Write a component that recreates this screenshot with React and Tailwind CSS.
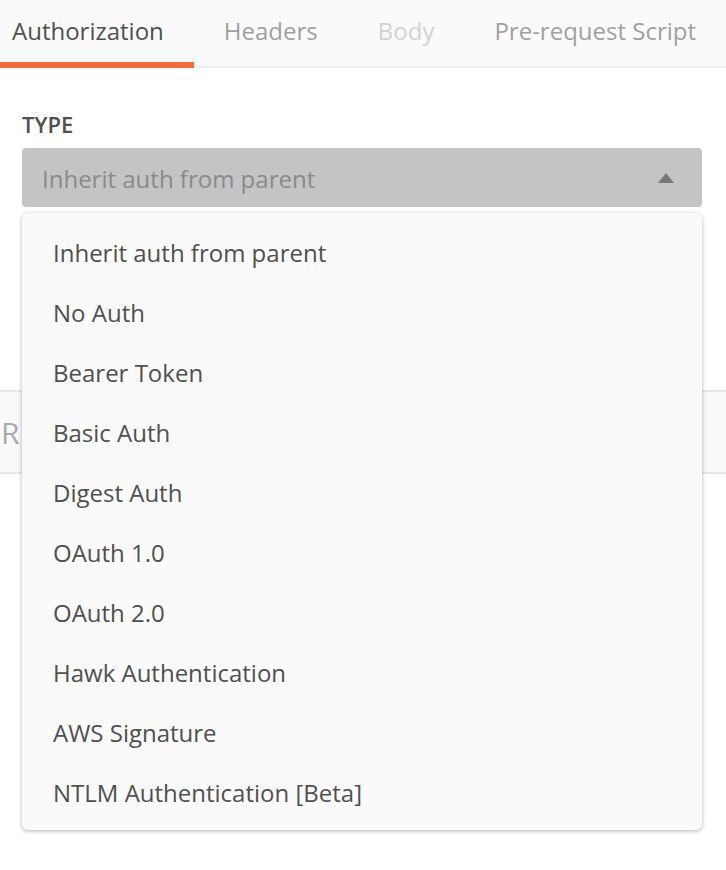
import React from 'react';

const TABS = [
  { label: 'Authorization', active: true },
  { label: 'Headers' },
  { label: 'Body', muted: true },
  { label: 'Pre-request Script' },
];

const AUTH_TYPES = [
  'Inherit auth from parent',
  'No Auth',
  'Bearer Token',
  'Basic Auth',
  'Digest Auth',
  'OAuth 1.0',
  'OAuth 2.0',
  'Hawk Authentication',
  'AWS Signature',
  'NTLM Authentication [Beta]',
];

export default function App() {
  return (
    <div
      className="relative w-[726px] h-[870px] overflow-hidden bg-white"
      style={{ fontFamily: '"Open Sans", "Liberation Sans", sans-serif' }}
    >
      {/* Tabs */}
      <div className="flex h-[68px] bg-[#fafafa] border-b-2 border-[#ececec] whitespace-nowrap">
        {TABS.map((t) => (
          <div
            key={t.label}
            className={`flex items-center text-[24px] px-[30px] first:pl-[12px] -mb-[2px] border-b-[6px] ${
              t.active
                ? 'text-[#505050] border-[#f26b3a]'
                : t.muted
                ? 'text-[#d2d2d2] border-transparent'
                : 'text-[#a0a0a0] border-transparent'
            }`}
          >
            {t.label}
          </div>
        ))}
      </div>

      {/* Auth type */}
      <div className="pl-[22px] pr-[24px] pt-[40px]">
        <div className="text-[22px] font-semibold text-[#505050] leading-[32px]">TYPE</div>
        <div className="mt-[8px] h-[59px] rounded-[4px] bg-[#c4c4c4] flex items-center justify-between pl-[20px] pr-[28px]">
          <span className="text-[24px] text-[#8a8a8a] pt-[2px]">Inherit auth from parent</span>
          <svg width="16" height="10" viewBox="0 0 16 10">
            <path d="M8 0 L16 10 L0 10 Z" fill="#777777" />
          </svg>
        </div>
      </div>

      {/* Section behind the menu */}
      <div className="mt-[183px] h-[84px] bg-[#f9f9f9] border-y-2 border-[#e6e6e6] flex items-center pl-[1px]">
        <span className="text-[30px] text-[#aaaaaa]">R</span>
      </div>

      {/* Dropdown menu */}
      <div className="absolute left-[22px] top-[213px] w-[680px] rounded-[6px] bg-[#fafafa] shadow-[0_1px_4px_rgba(0,0,0,0.3)] pt-[10px] pb-[7px]">
        {AUTH_TYPES.map((a) => (
          <div key={a} className="h-[60px] flex items-center px-[31px] text-[24px] text-[#505050]">
            {a}
          </div>
        ))}
      </div>
    </div>
  );
}
